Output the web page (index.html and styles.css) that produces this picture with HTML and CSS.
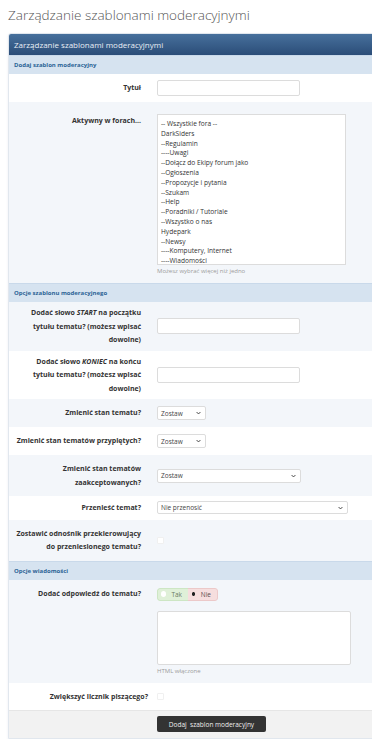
FILE: index.html
```html
<!DOCTYPE html>
<html lang="pl">
<head>
    <meta charset="UTF-8">
    <meta name="viewport" content="width=device-width, initial-scale=1.0">
    <title>Zarządzanie szablonami moderacyjnymi</title>
    <link rel="stylesheet" href="styles.css">
</head>
<body>
    <h1 class="page-title">Zarządzanie szablonami moderacyjnymi</h1>

    <div class="panel">
        <div class="panel-head">Zarządzanie szablonami moderacyjnymi</div>

        <div class="section-head">Dodaj szablon moderacyjny</div>

        <div class="row pad-6">
            <label class="row-label">Tytuł</label>
            <div class="row-field"><input type="text" class="text-input"></div>
        </div>

        <div class="row row-top alt pad-list">
            <label class="row-label">Aktywny w forach...</label>
            <div class="row-field">
                <div class="listbox">
                    <div>-- Wszystkie fora --</div>
                    <div>DarkSiders</div>
                    <div>--Regulamin</div>
                    <div>----Uwagi</div>
                    <div>--Dołącz do Ekipy forum jako</div>
                    <div>--Ogłoszenia</div>
                    <div>--Propozycje i pytania</div>
                    <div>--Szukam</div>
                    <div>--Help</div>
                    <div>--Poradniki / Tutoriale</div>
                    <div>--Wszystko o nas</div>
                    <div>Hydepark</div>
                    <div>--Newsy</div>
                    <div>----Komputery, Internet</div>
                    <div>----Wiadomości</div>
                </div>
                <div class="hint">Możesz wybrać więcej niż jedno</div>
            </div>
        </div>

        <div class="section-head">Opcje szablonu moderacyjnego</div>

        <div class="row alt pad-4">
            <label class="row-label"><span>Dodać słowo <em>START</em> na początku</span> <span>tytułu tematu? (możesz wpisać dowolne)</span></label>
            <div class="row-field"><input type="text" class="text-input"></div>
        </div>

        <div class="row pad-4">
            <label class="row-label"><span>Dodać słowo <em>KONIEC</em> na końcu</span> <span>tytułu tematu? (możesz wpisać dowolne)</span></label>
            <div class="row-field"><input type="text" class="text-input"></div>
        </div>

        <div class="row alt">
            <label class="row-label">Zmienić stan tematu?</label>
            <div class="row-field">
                <div class="select select-sm"><span>Zostaw</span><svg viewBox="0 0 8 5"><path d="M1 1l3 3 3-3"/></svg></div>
            </div>
        </div>

        <div class="row">
            <label class="row-label">Zmienić stan tematów przypiętych?</label>
            <div class="row-field">
                <div class="select select-sm"><span>Zostaw</span><svg viewBox="0 0 8 5"><path d="M1 1l3 3 3-3"/></svg></div>
            </div>
        </div>

        <div class="row alt">
            <label class="row-label">Zmienić stan tematów zaakceptowanych?</label>
            <div class="row-field">
                <div class="select select-md"><span>Zostaw</span><svg viewBox="0 0 8 5"><path d="M1 1l3 3 3-3"/></svg></div>
            </div>
        </div>

        <div class="row pad-5">
            <label class="row-label">Przenieść temat?</label>
            <div class="row-field">
                <div class="select select-lg"><span>Nie przenosić</span><svg viewBox="0 0 8 5"><path d="M1 1l3 3 3-3"/></svg></div>
            </div>
        </div>

        <div class="row alt">
            <label class="row-label">Zostawić odnośnik przekierowujący do przeniesionego tematu?</label>
            <div class="row-field"><span class="checkbox"></span></div>
        </div>

        <div class="section-head">Opcje wiadomości</div>

        <div class="row row-top alt">
            <label class="row-label">Dodać odpowiedź do tematu?</label>
            <div class="row-field">
                <div class="toggle">
                    <span class="toggle-yes"><i class="radio"></i>Tak</span>
                    <span class="toggle-no"><i class="radio checked"></i>Nie</span>
                </div>
                <textarea class="textarea"></textarea>
                <div class="hint">HTML włączone</div>
            </div>
        </div>

        <div class="row">
            <label class="row-label wide">Zwiększyć licznik piszącego?</label>
            <div class="row-field"><span class="checkbox"></span></div>
        </div>

        <div class="panel-foot">
            <button class="btn">Dodaj&nbsp; szablon moderacyjny</button>
        </div>
    </div>
</body>
</html>
```

FILE: styles.css
```css
* {
    margin: 0;
    padding: 0;
    box-sizing: border-box;
}

html, body {
    overflow: hidden;
}

body {
    background-color: #fff;
    font-family: 'Open Sans', 'DejaVu Sans', sans-serif;
    color: #333;
    padding-left: 8px;
    width: 400px;
}

.page-title {
    font-size: 13.5px;
    font-weight: 300;
    line-height: 20px;
    color: #555;
    padding-top: 5px;
    margin-bottom: 8px;
}

.panel {
    width: 392px;
    border: 1px solid #e1e7ee;
    border-radius: 3px 3px 0 0;
    box-shadow: 0 1px 3px rgba(40, 70, 110, 0.08);
}

.panel-head {
    height: 21px;
    line-height: 21px;
    padding-left: 5px;
    font-size: 8px;
    color: #e8eef5;
    background: linear-gradient(#47709c, #2b4d78);
    border-radius: 2px 2px 0 0;
}

.section-head {
    height: 19px;
    line-height: 19px;
    padding-left: 5px;
    font-size: 6px;
    font-weight: 700;
    color: #2c6396;
    background-color: #d6e3f0;
    border-top: 1px solid #c9d9ea;
}

.row {
    display: grid;
    grid-template-columns: 132px 1fr;
    column-gap: 16px;
    align-items: center;
    padding: 7px 0;
    background-color: #fff;
}

.row.alt {
    background-color: #f3f6fa;
}

.row-top {
    align-items: start;
}

.pad-6 { padding: 6px 0; }
.pad-5 { padding: 5px 0; }
.pad-4 { padding: 4px 0; }
.pad-list { padding: 12px 0 7px; }

.row-label {
    padding-left: 5px;
    text-align: right;
    font-size: 7px;
    font-weight: 700;
    line-height: 13.5px;
    color: #333;
}

.row-label span {
    display: block;
}

.row-label em {
    font-weight: 700;
}

.row-label.wide {
    margin-right: -7px;
}

.row-field {
    display: flex;
    flex-direction: column;
    align-items: flex-start;
}

.text-input {
    width: 143px;
    height: 16px;
    border: 1px solid #dcdcdc;
    border-radius: 2px;
    background-color: #fff;
}

.listbox {
    width: 189px;
    height: 151px;
    padding: 4px 3px;
    border: 1px solid #dcdcdc;
    background-color: #fff;
    font-size: 6.6px;
    line-height: 9.8px;
    color: #333;
}

.hint {
    margin-top: 1px;
    font-size: 6px;
    line-height: 10px;
    color: #9c9c9c;
}

.select {
    display: flex;
    align-items: center;
    justify-content: space-between;
    height: 14px;
    padding: 0 4px 0 3px;
    border: 1px solid #dcdcdc;
    border-radius: 2px;
    background-color: #fff;
    font-size: 6.5px;
    color: #444;
}

.select svg {
    width: 5px;
    height: 4px;
    fill: none;
    stroke: #444;
    stroke-width: 1.6;
}

.select-sm { width: 49px; }
.select-md { width: 144px; }
.select-lg { width: 191px; height: 13px; }

.checkbox {
    display: block;
    width: 7px;
    height: 7px;
    border: 1px solid #f0f0f0;
    border-radius: 1px;
    background-color: #fff;
}

.toggle {
    display: flex;
    height: 13px;
    margin-top: 1px;
    border-radius: 3px;
    overflow: hidden;
    font-size: 6.5px;
}

.toggle span {
    display: flex;
    align-items: center;
    gap: 5px;
    padding: 0 6px 0 3px;
}

.toggle-yes {
    width: 31px;
    background-color: #dff0d8;
    border: 1px solid #cde6c4;
    border-right: none;
    border-radius: 3px 0 0 3px;
    color: #6b7a66;
}

.toggle-no {
    width: 30px;
    background-color: #f6dede;
    border: 1px solid #ecc9c9;
    border-left: none;
    border-radius: 0 3px 3px 0;
    color: #5a4d4d;
}

.radio {
    display: block;
    width: 6px;
    height: 6px;
    border-radius: 50%;
    background-color: #fff;
}

.radio.checked {
    background: radial-gradient(circle, #222 0 1.6px, #f6dede 2px);
}

.textarea {
    display: block;
    width: 194px;
    height: 54px;
    margin-top: 10px;
    border: 1px solid #dcdcdc;
    border-radius: 2px;
    background-color: #fff;
    resize: none;
}

.panel-foot {
    display: flex;
    padding: 5px 0 6px 148px;
    background-color: #f2f2f2;
    border-top: 1px solid #e6e6e6;
}

.btn {
    width: 109px;
    height: 16px;
    border: none;
    border-radius: 2px;
    background-color: #333;
    color: #eee;
    font-family: 'Open Sans', 'DejaVu Sans', sans-serif;
    font-size: 6.5px;
}
```
